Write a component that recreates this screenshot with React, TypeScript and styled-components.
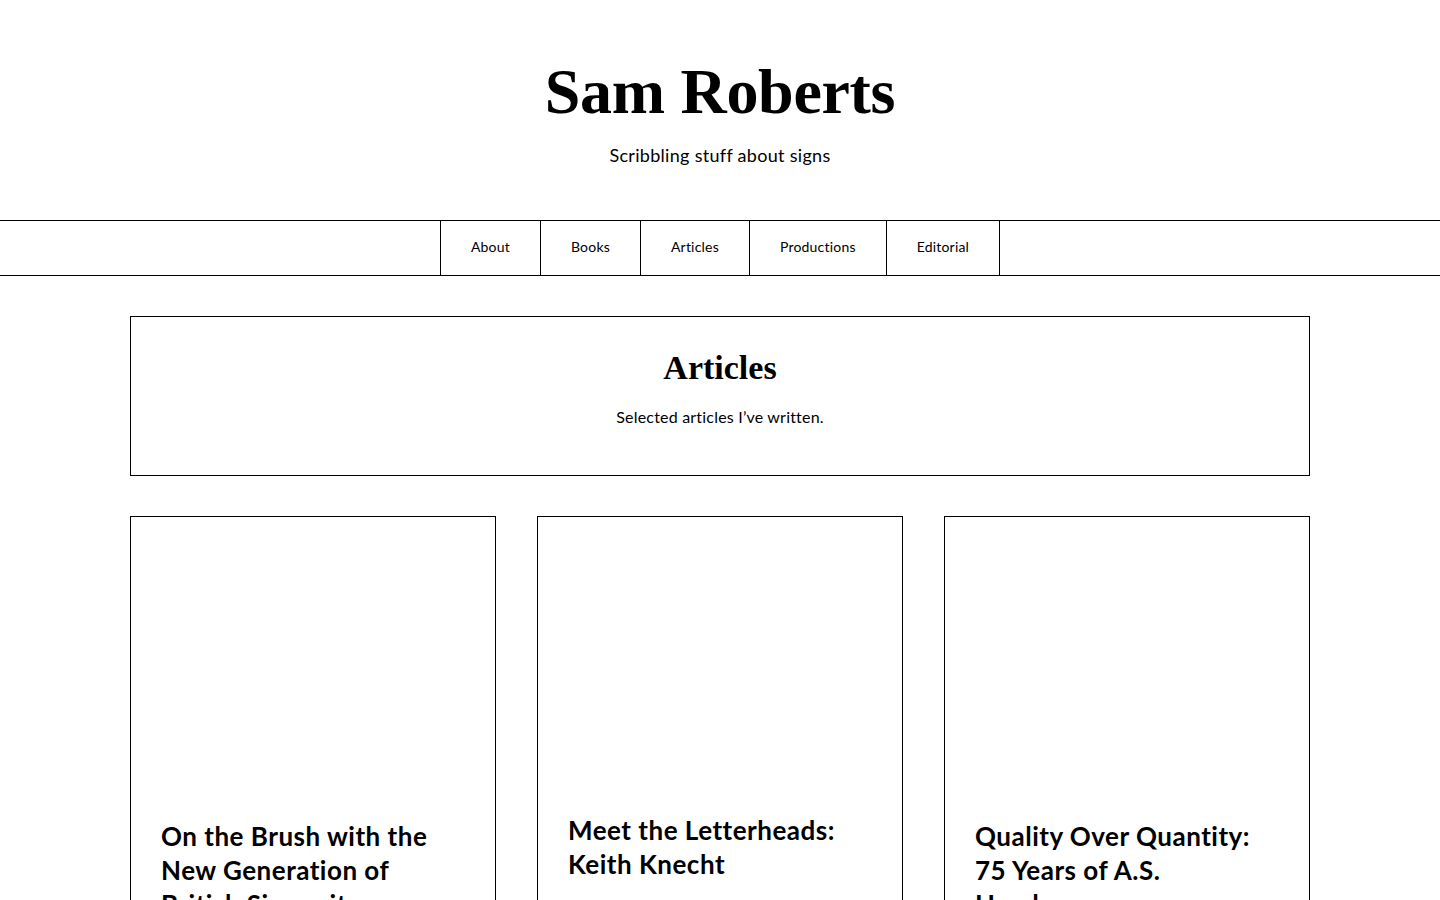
import React from "react";
import styled, { createGlobalStyle } from "styled-components";

const Global = createGlobalStyle`
  html, body { margin: 0; padding: 0; background: #fff; }
  body {
    font-family: "Lato", "Noto Sans", sans-serif;
    color: #000;
  }
  * { box-sizing: border-box; }
`;

const serif = `"Liberation Serif", "DejaVu Serif", serif`;

const Header = styled.header`
  display: flex;
  flex-direction: column;
  align-items: center;
  padding: 53px 20px 51px;
`;

const SiteTitle = styled.h1`
  margin: 0;
  font-family: ${serif};
  font-weight: 700;
  font-size: 64px;
  line-height: 77px;
  letter-spacing: -0.3px;
`;

const Tagline = styled.p`
  margin: 12px 0 0;
  font-size: 18px;
  line-height: 27px;
  letter-spacing: 0.3px;
`;

const Nav = styled.nav`
  display: flex;
  justify-content: center;
  border-top: 1px solid #000;
  border-bottom: 1px solid #000;
`;

const NavItem = styled.a`
  display: flex;
  align-items: center;
  height: 54px;
  padding: 0 30px 3px;
  font-size: 14px;
  letter-spacing: 0.2px;
  color: #000;
  text-decoration: none;
  border-left: 1px solid #000;
  &:last-child { border-right: 1px solid #000; }
`;

const Main = styled.main`
  max-width: 1180px;
  margin: 40px auto 0;
  display: flex;
  flex-direction: column;
  gap: 40px;
`;

const Intro = styled.section`
  border: 1px solid #000;
  padding: 30px 30px 46px;
  display: flex;
  flex-direction: column;
  align-items: center;
`;

const IntroTitle = styled.h2`
  margin: 0;
  font-family: ${serif};
  font-weight: 700;
  font-size: 34px;
  line-height: 42px;
`;

const IntroText = styled.p`
  margin: 16px 0 0;
  font-size: 16px;
  line-height: 24px;
  letter-spacing: 0.2px;
`;

const Grid = styled.div`
  display: grid;
  grid-template-columns: repeat(3, 1fr);
  gap: 41px;
  padding-bottom: 60px;
`;

const Card = styled.article`
  border: 1px solid #000;
  display: flex;
  flex-direction: column;
`;

const Media = styled.div<{ $h: number }>`
  height: ${(p) => p.$h}px;
  background: #fff;
`;

const CardBody = styled.div`
  padding: 30px 30px 40px;
`;

const CardTitle = styled.h3`
  margin: 0;
  font-size: 26px;
  font-weight: 700;
  line-height: 34px;
  letter-spacing: 0.5px;
`;

const CardMeta = styled.p`
  margin: 16px 0 0;
  font-size: 15px;
  line-height: 24px;
`;

const articles = [
  { title: "On the Brush with the New Generation of British Signwriters", h: 272, meta: "Signs of the Times" },
  { title: "Meet the Letterheads: Keith Knecht", h: 266, meta: "Signs of the Times" },
  { title: "Quality Over Quantity: 75 Years of A.S. Handover", h: 272, meta: "Signs of the Times" },
];

const navItems = ["About", "Books", "Articles", "Productions", "Editorial"];

export default function App() {
  return (
    <>
      <Global />
      <Header>
        <SiteTitle>Sam Roberts</SiteTitle>
        <Tagline>Scribbling stuff about signs</Tagline>
      </Header>
      <Nav>
        {navItems.map((n) => (
          <NavItem key={n} href="#">{n}</NavItem>
        ))}
      </Nav>
      <Main>
        <Intro>
          <IntroTitle>Articles</IntroTitle>
          <IntroText>Selected articles I’ve written.</IntroText>
        </Intro>
        <Grid>
          {articles.map((a) => (
            <Card key={a.title}>
              <Media $h={a.h} />
              <CardBody>
                <CardTitle>{a.title}</CardTitle>
                <CardMeta>{a.meta}</CardMeta>
              </CardBody>
            </Card>
          ))}
        </Grid>
      </Main>
    </>
  );
}
